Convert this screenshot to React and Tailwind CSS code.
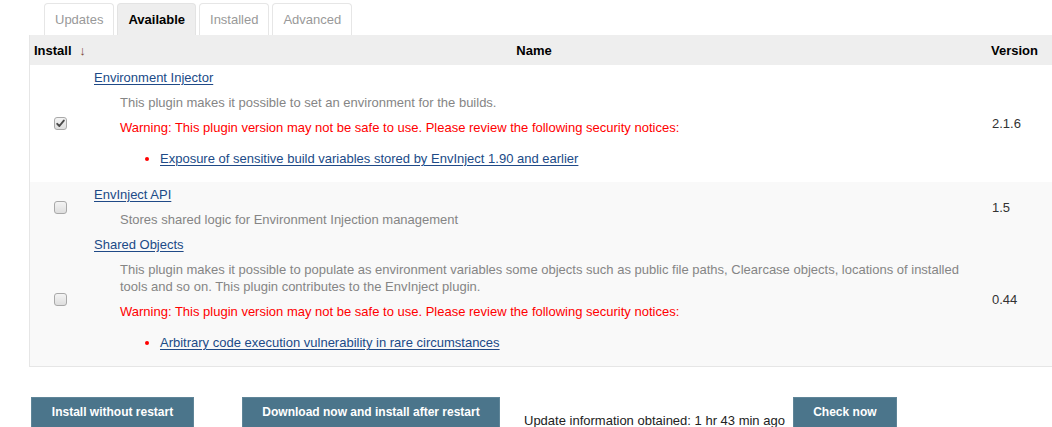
import React from "react";

function Box({ checked }) {
  return (
    <span className="inline-flex h-[13px] w-[13px] items-center justify-center rounded-[3px] border border-[#a9a9a9] bg-gradient-to-b from-[#f4f4f4] to-[#dedede]">
      {checked && (
        <svg width="9" height="9" viewBox="0 0 9 9">
          <path d="M1.2 4.8 L3.4 7 L7.8 1.6" fill="none" stroke="#4a4a4a" strokeWidth="1.9" strokeLinecap="round" strokeLinejoin="round" />
        </svg>
      )}
    </span>
  );
}

function Tab({ label, active }) {
  return (
    <div
      className={
        "flex h-[32px] items-center rounded-t-[4px] border border-b-0 px-[10px] " +
        (active
          ? "border-[#e3e3e3] bg-[#eeeeee] font-bold text-black"
          : "border-[#e6e6e6] bg-white text-[#999999]")
      }
    >
      {label}
    </div>
  );
}

function Link({ children }) {
  return <a className="text-[#204a87] underline underline-offset-[2px] decoration-[#204a87]">{children}</a>;
}

function Row({ bg, checked, version, children }) {
  return (
    <div className={"grid grid-cols-[60px_898px_1fr] " + bg}>
      <div className="flex items-center justify-center">
        <Box checked={checked} />
      </div>
      <div className="pl-[4px] pt-[4px] pb-[4px]">{children}</div>
      <div className="flex items-center pl-[4px] text-[#333333]">{version}</div>
    </div>
  );
}

export default function App() {
  return (
    <div className="h-[427px] w-[1052px] overflow-hidden bg-white font-['Liberation_Sans',Arial,sans-serif] text-[13px] leading-[17px] text-[#333333]">
      <div className="flex gap-[3px] pl-[44px] pt-[3px]">
        <Tab label="Updates" />
        <Tab label="Available" active />
        <Tab label="Installed" />
        <Tab label="Advanced" />
      </div>
      <div className="ml-[29px] w-[1100px] border-b border-l border-[#e6e6e6]">
        <div className="grid h-[30px] grid-cols-[60px_898px_1fr] items-center bg-[#eeeeee] font-bold text-black">
          <div className="pl-[4px]">
            Install <span className="ml-[4px] font-normal text-[#7a4a35]">↓</span>
          </div>
          <div className="pr-[10px] text-center">Name</div>
          <div className="pl-[3px]">Version</div>
        </div>

        <Row bg="bg-white" checked version="2.1.6">
          <Link>Environment Injector</Link>
          <div className="mt-[8px] pl-[26px] text-[#858585]">This plugin makes it possible to set an environment for the builds.</div>
          <div className="mt-[8px] pl-[26px] text-[#ff0000]">
            Warning: This plugin version may not be safe to use. Please review the following security notices:
          </div>
          <ul className="mb-[11px] mt-[14px] pl-[51px]">
            <li className="flex items-center">
              <span className="mr-[11px] inline-block h-[4px] w-[4px] rounded-full bg-[#ff0000]" />
              <Link>Exposure of sensitive build variables stored by EnvInject 1.90 and earlier</Link>
            </li>
          </ul>
        </Row>

        <Row bg="bg-[#f9f9f9]" version="1.5">
          <Link>EnvInject API</Link>
          <div className="mt-[8px] pl-[26px] text-[#858585]">Stores shared logic for Environment Injection management</div>
        </Row>

        <Row bg="bg-[#f9f9f9]" version="0.44">
          <Link>Shared Objects</Link>
          <div className="mt-[8px] pl-[26px] text-[#858585]">
            This plugin makes it possible to populate as environment variables some objects such as public file paths, Clearcase objects, locations of installed tools and so on. This plugin contributes to the EnvInject plugin.
          </div>
          <div className="mt-[8px] pl-[26px] text-[#ff0000]">
            Warning: This plugin version may not be safe to use. Please review the following security notices:
          </div>
          <ul className="mb-[11px] mt-[14px] pl-[51px]">
            <li className="flex items-center">
              <span className="mr-[11px] inline-block h-[4px] w-[4px] rounded-full bg-[#ff0000]" />
              <Link>Arbitrary code execution vulnerability in rare circumstances</Link>
            </li>
          </ul>
        </Row>
      </div>

      <div className="mt-[30px] flex items-start pl-[31px]">
        <button className="h-[32px] w-[163px] border border-[#5f8598] bg-[#4b758b] pb-[1px] text-[12px] font-bold text-white">
          Install without restart
        </button>
        <button className="ml-[48px] h-[32px] w-[258px] border border-[#5f8598] bg-[#4b758b] pb-[1px] text-[12px] font-bold text-white">
          Download now and install after restart
        </button>
        <span className="ml-[24px] mt-[15px] text-[#222222]">Update information obtained: 1 hr 43 min ago</span>
        <button className="ml-[8px] h-[32px] w-[104px] border border-[#5f8598] bg-[#4b758b] pb-[1px] text-[12px] font-bold text-white">
          Check now
        </button>
      </div>
    </div>
  );
}
